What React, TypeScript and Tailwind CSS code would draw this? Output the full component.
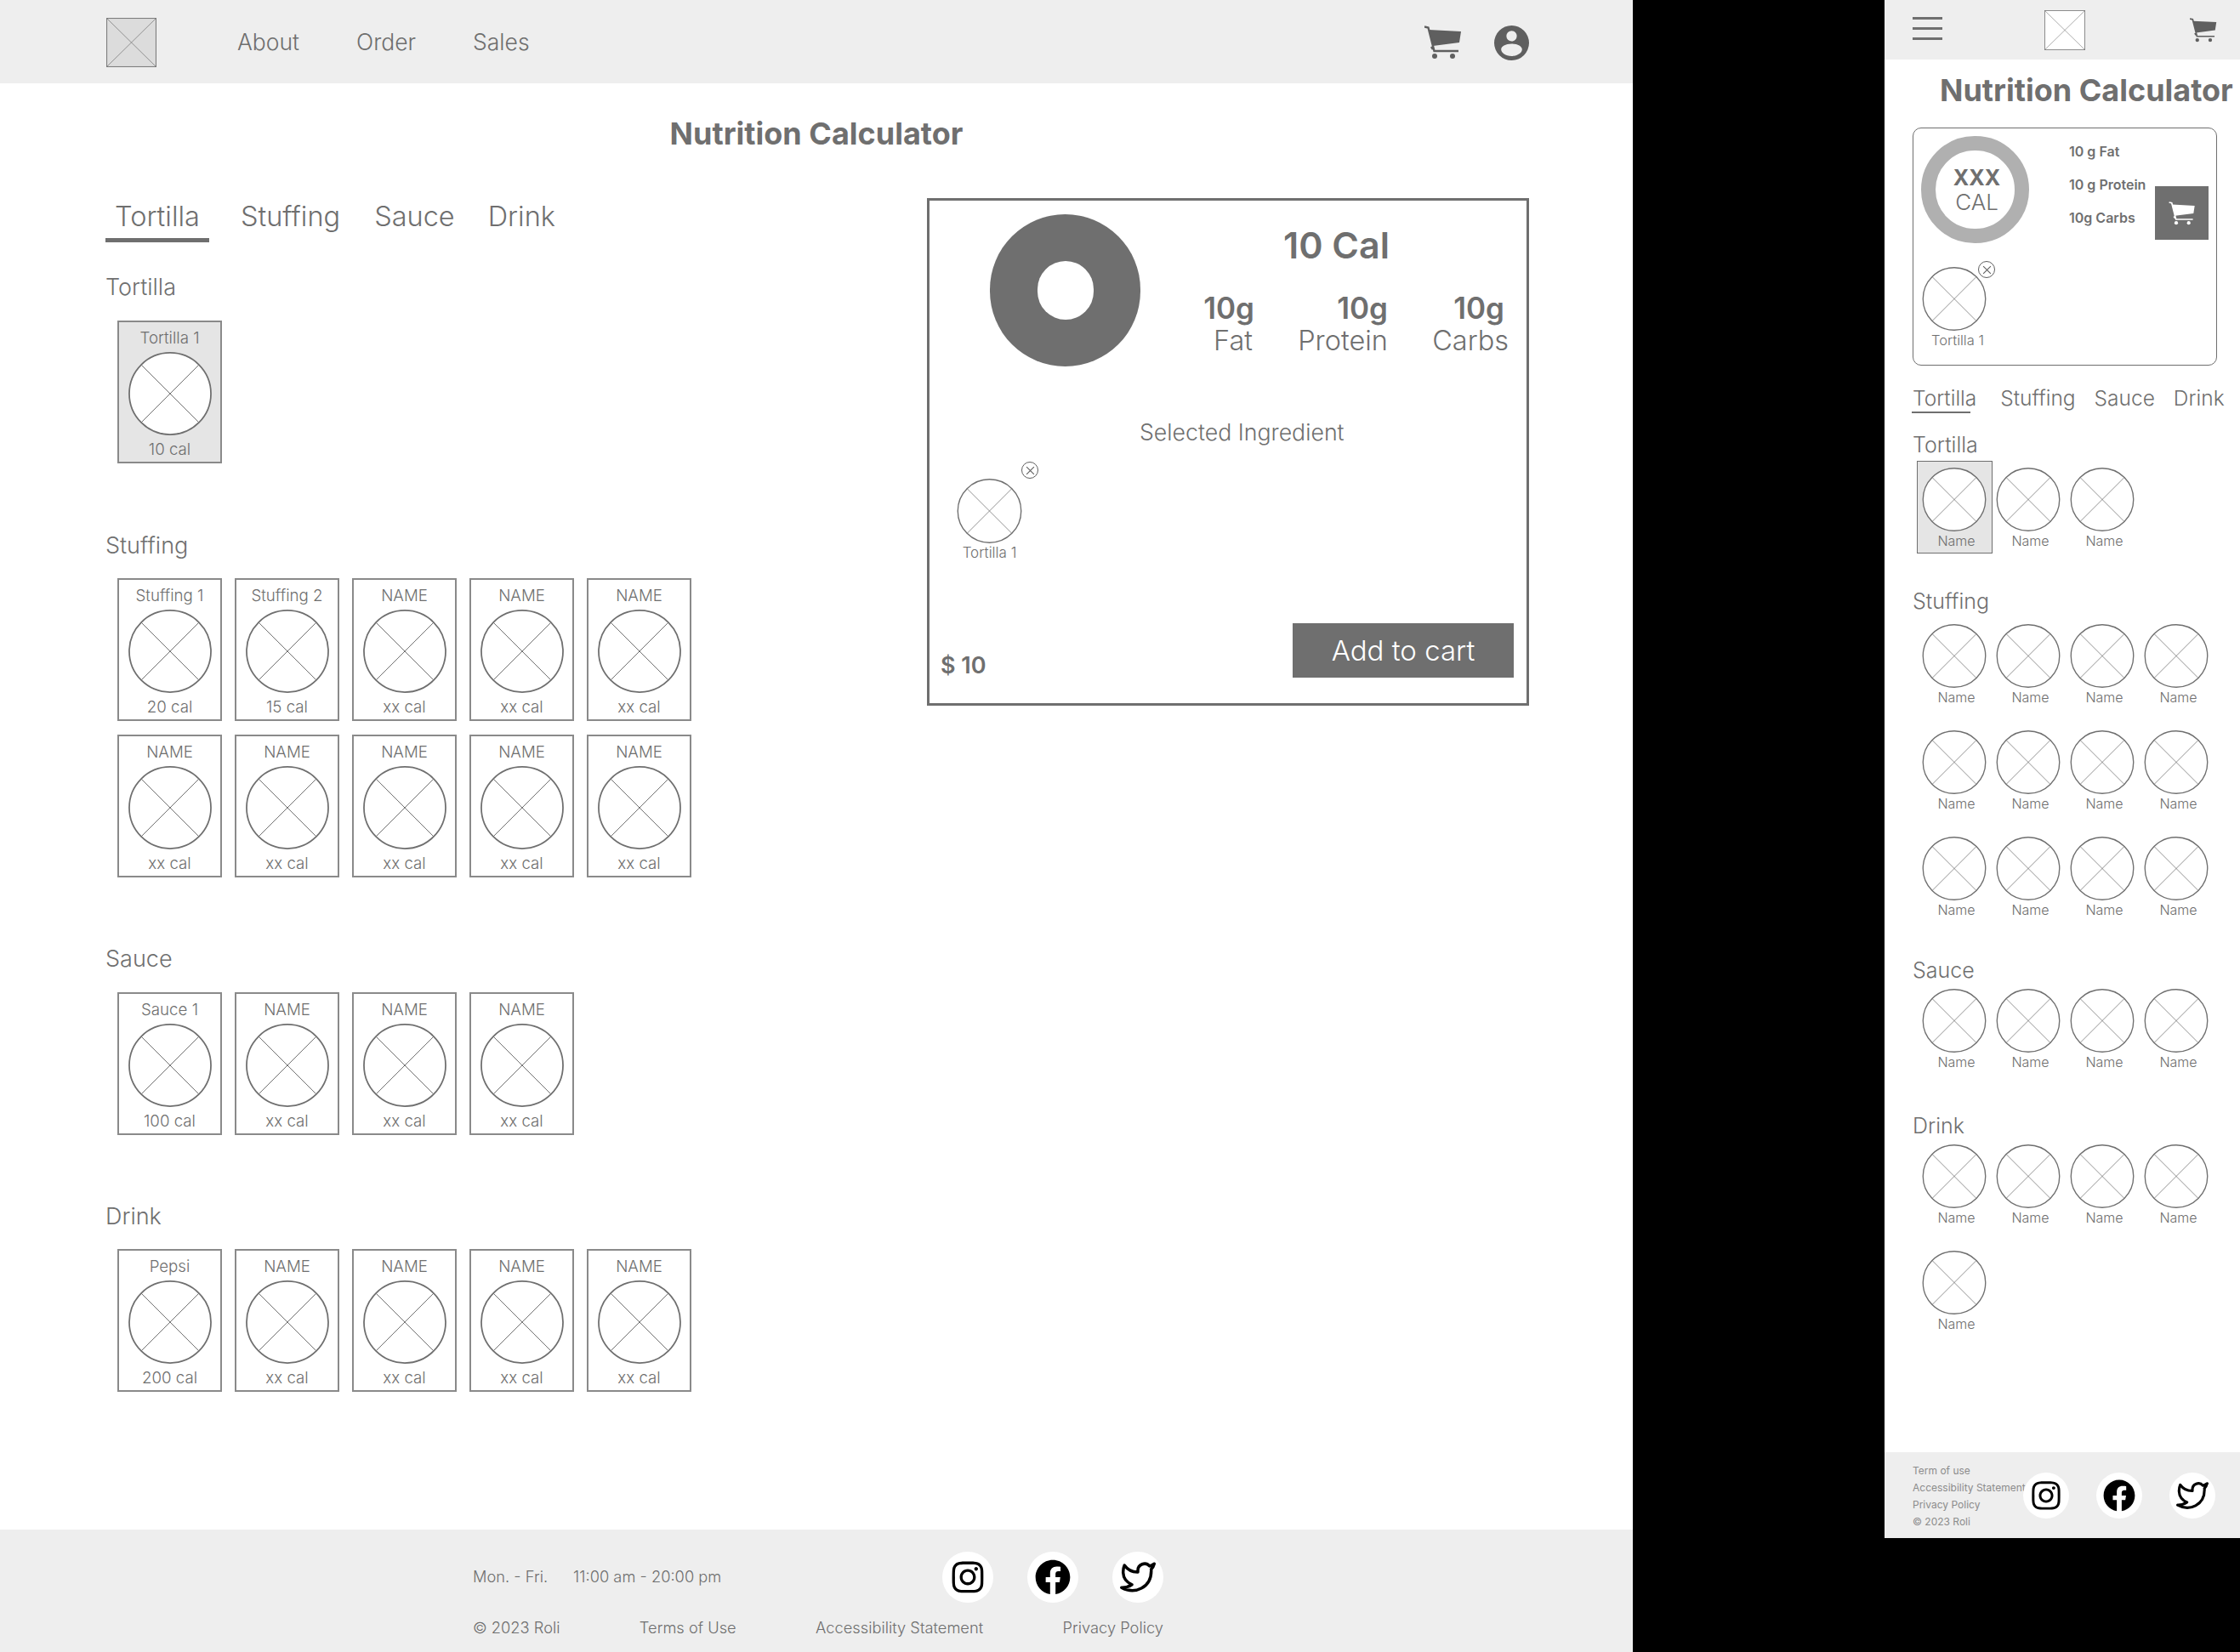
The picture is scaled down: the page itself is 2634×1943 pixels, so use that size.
import { FaFacebook, FaInstagram } from "react-icons/fa";
import { FiTwitter } from "react-icons/fi";

const stuffing = [
  { name: "Stuffing 1", cal: "20 cal" },
  { name: "Stuffing 2", cal: "15 cal" },
  ...Array.from({ length: 8 }, () => ({ name: "NAME", cal: "xx cal" })),
];
const sauces = [
  { name: "Sauce 1", cal: "100 cal" },
  ...Array.from({ length: 3 }, () => ({ name: "NAME", cal: "xx cal" })),
];
const drinks = [
  { name: "Pepsi", cal: "200 cal" },
  ...Array.from({ length: 4 }, () => ({ name: "NAME", cal: "xx cal" })),
];

const CrossCircle = ({ className }: { className: string }) => (
  <svg viewBox="0 0 100 100" className={className}>
    <circle cx="50" cy="50" r="49" fill="#fff" stroke="#6f6f6f" strokeWidth="1.8" />
    <path d="M15.500 15.500 84.500 84.500M84.500 15.500 15.500 84.500" stroke="#6f6f6f" strokeWidth="1" />
  </svg>
);

const LogoBox = ({ className, fill }: { className: string; fill: string }) => (
  <svg viewBox="0 0 60 60" preserveAspectRatio="none" className={className}>
    <rect x="0.5" y="0.5" width="59" height="59" fill={fill} stroke="#7d7d7d" strokeWidth="1.2" />
    <path d="M0 0 60 60M60 0 0 60" stroke="#7d7d7d" strokeWidth="0.8" />
  </svg>
);

const CartIcon = ({ className, color }: { className: string; color: string }) => (
  <svg viewBox="0 0 44 40" className={className}>
    <path d="M5 5 43 7 41 20 10 24Z" fill={color} />
    <path d="M0 1.500 4.500 2.500 11.500 30H40M8 25l2 3" fill="none" stroke={color} strokeWidth="2.400" />
    <circle cx="12" cy="36" r="3" fill={color} />
    <circle cx="33" cy="36" r="3" fill={color} />
  </svg>
);

const UserIcon = () => (
  <svg viewBox="0 0 40 40" className="h-[41px] w-[41px]">
    <path
      fillRule="evenodd"
      fill="#5f5f5f"
      d="M20 0a20 20 0 1 0 0 40a20 20 0 1 0 0-40ZM20 6a6 6 0 1 1 0 12a6 6 0 1 1 0-12ZM20 21c7 0 12 3 12 6.500s-5 7.500-12 7.500s-12-4-12-7.500s5-6.500 12-6.500Z"
    />
  </svg>
);

const RemoveButton = ({ className }: { className: string }) => (
  <span className={`absolute flex h-[20px] w-[20px] items-center justify-center rounded-full border border-[#5f5f5f] bg-white ${className}`}>
    <svg viewBox="0 0 10 10" className="h-[11px] w-[11px]">
      <path d="M1 1 9 9M9 1 1 9" stroke="#5f5f5f" strokeWidth="1" />
    </svg>
  </span>
);

const SocialIcons = ({ circle, icon, gap }: { circle: string; icon: string; gap: string }) => (
  <div className={`flex shrink-0 items-center ${gap}`}>
    <span className={`flex items-center justify-center rounded-full bg-white ${circle}`}>
      <FaInstagram className={`text-black ${icon}`} />
    </span>
    <span className={`flex items-center justify-center rounded-full bg-white ${circle}`}>
      <FaFacebook className={`text-black ${icon}`} />
    </span>
    <span className={`flex items-center justify-center rounded-full bg-white ${circle}`}>
      <FiTwitter className={`text-black ${icon}`} />
    </span>
  </div>
);

const IngredientCard = ({ name, cal, active }: { name: string; cal: string; active?: boolean }) => (
  <div
    className={`flex h-[168px] w-[123px] flex-col items-center border-2 border-[#8a8a8a] pt-[7px] text-[18.700px] leading-[24px] font-light ${active ? "bg-[#e5e5e5]" : "bg-white"}`}
  >
    <span>{name}</span>
    <CrossCircle className="mt-[4px] h-[98px] w-[98px]" />
    <span className="mt-[5px]">{cal}</span>
  </div>
);

const DesktopSection = ({
  title,
  items,
  className,
  gridClass,
  active,
}: {
  title: string;
  items: { name: string; cal: string }[];
  className: string;
  gridClass: string;
  active?: boolean;
}) => (
  <section className={className}>
    <h2 className="h-[36px] text-[27px] leading-[36px] font-light">{title}</h2>
    <div className={`ml-[14px] grid grid-cols-[repeat(5,123px)] gap-x-[15px] gap-y-[16px] ${gridClass}`}>
      {items.map((item, i) => (
        <IngredientCard key={i} name={item.name} cal={item.cal} active={active} />
      ))}
    </div>
  </section>
);

const Desktop = () => (
  <div className="flex h-[1943px] w-[1920px] shrink-0 flex-col bg-white">
    <header className="flex h-[98px] shrink-0 items-center justify-between bg-[#eeeeee] pt-[2px] pr-[122px] pl-[125px]">
      <div className="flex items-center">
        <LogoBox className="h-[58px] w-[59px]" fill="#dcdcdc" />
        <nav className="ml-[95px] flex gap-[67px] text-[26.500px] font-light">
          <a>About</a>
          <a>Order</a>
          <a>Sales</a>
        </nav>
      </div>
      <div className="flex items-center gap-[38px]">
        <CartIcon className="h-[40px] w-[44px]" color="#5f5f5f" />
        <UserIcon />
      </div>
    </header>

    <h1 className="mt-[37px] h-[44px] text-center text-[36px] leading-[44px] font-bold">Nutrition Calculator</h1>

    <main className="mt-[54px] flex flex-1">
      <div className="w-[1090px] shrink-0 pl-[124px]">
        <div className="flex h-[52px] items-start text-[32.500px] leading-[44px] font-light">
          <span className="flex h-[52px] w-[122px] justify-center border-b-[5px] border-[#6f6f6f]">Tortilla</span>
          <span className="ml-[37px]">Stuffing</span>
          <span className="ml-[40px]">Sauce</span>
          <span className="ml-[39px]">Drink</span>
        </div>
        <DesktopSection className="mt-[35px]" gridClass="mt-[21px]" title="Tortilla" active items={[{ name: "Tortilla 1", cal: "10 cal" }]} />
        <DesktopSection className="mt-[79px]" gridClass="mt-[20px]" title="Stuffing" items={stuffing} />
        <DesktopSection className="mt-[78px]" gridClass="mt-[21px]" title="Sauce" items={sauces} />
        <DesktopSection className="mt-[78px]" gridClass="mt-[20px]" title="Drink" items={drinks} />
      </div>

      <aside className="flex h-[597px] w-[708px] shrink-0 flex-col border-[3px] border-[#6f6f6f]">
        <div className="flex pt-[16px] pl-[71px]">
          <div className="flex h-[179px] w-[177px] shrink-0 items-center justify-center rounded-full bg-[#6f6f6f]">
            <div className="h-[69px] w-[66px] rounded-full bg-white" />
          </div>
          <div className="ml-[70px] w-[363px]">
            <div className="mt-[9px] pr-[42px] text-center text-[43px] leading-[54px] font-semibold">10 Cal</div>
            <div className="mt-[27px] grid grid-cols-[62px_159px_142px] text-right">
              <span className="-mr-[2px] text-[35px] leading-[40px] font-semibold">10g</span>
              <span className="text-[35px] leading-[40px] font-semibold">10g</span>
              <span className="pr-[5px] text-[35px] leading-[40px] font-semibold">10g</span>
              <span className="text-[32.500px] leading-[38px] font-light">Fat</span>
              <span className="text-[32.500px] leading-[38px] font-light">Protein</span>
              <span className="text-[32.500px] leading-[38px] font-light">Carbs</span>
            </div>
          </div>
        </div>
        <div className="mt-[61px] pl-[247px] text-[26.700px] leading-[32px] font-light">Selected Ingredient</div>
        <div className="mt-[39px] ml-[32px] flex w-[77px] flex-col items-center">
          <div className="relative h-[76px] w-[77px]">
            <CrossCircle className="h-[76px] w-[77px]" />
            <RemoveButton className="-top-[20px] -right-[19px]" />
          </div>
          <span className="mt-[1px] text-[17px] leading-[20px] font-light whitespace-nowrap">Tortilla 1</span>
        </div>
        <div className="mt-auto flex items-end justify-between pr-[15px] pb-[30px] pl-[13px]">
          <span className="-mb-[4px] text-[27px] leading-[36px] font-semibold">$ 10</span>
          <button className="h-[64px] w-[260px] bg-[#6f6f6f] pt-[2px] text-[33px] font-light text-white">Add to cart</button>
        </div>
      </aside>
    </main>

    <footer className="flex h-[144px] shrink-0 flex-col bg-[#eeeeee] pt-[26px] pl-[556px] text-[18.300px] font-light">
      <div className="flex h-[60px] w-[812px] items-center justify-between">
        <div className="flex gap-[30px]">
          <span>Mon. - Fri.</span>
          <span>11:00 am - 20:00 pm</span>
        </div>
        <SocialIcons circle="h-[60px] w-[60px]" icon="h-[42px] w-[42px]" gap="gap-[40px]" />
      </div>
      <div className="mt-[17px] flex w-[812px] justify-between leading-[24px]">
        <span>© 2023 Roli</span>
        <span>Terms of Use</span>
        <span>Accessibility Statement</span>
        <span>Privacy Policy</span>
      </div>
    </footer>
  </div>
);

const MobileItem = ({ name, active }: { name: string; active?: boolean }) => (
  <div className={`flex h-[109px] w-[89px] flex-col items-center border pt-[7px] ${active ? "border-[#6f6f6f] bg-[#e5e5e5]" : "border-transparent"}`}>
    <CrossCircle className="-ml-[1px] h-[75px] w-[76px]" />
    <span className="mt-[1px] pl-[4px] text-[16px] leading-[20px] font-light">{name}</span>
  </div>
);

const MobileSection = ({
  title,
  count,
  className,
  gridClass,
  active,
}: {
  title: string;
  count: number;
  className: string;
  gridClass: string;
  active?: boolean;
}) => (
  <section className={className}>
    <h2 className="ml-[33px] h-[30px] text-[25px] leading-[30px] font-light">{title}</h2>
    <div className={`ml-[38px] grid grid-cols-[repeat(4,87px)] gap-y-[16px] ${gridClass}`}>
      {Array.from({ length: count }, (_, i) => (
        <MobileItem key={i} name="Name" active={active && i === 0} />
      ))}
    </div>
  </section>
);

const Mobile = () => (
  <div className="ml-[296px] flex h-[1809px] w-[418px] shrink-0 flex-col bg-white">
    <header className="flex h-[70px] shrink-0 items-center justify-between bg-[#eeeeee] pr-[27px] pl-[33px]">
      <div className="mb-[4px] flex w-[35px] flex-col gap-[9px]">
        <span className="h-[3px] bg-[#6f6f6f]" />
        <span className="h-[3px] bg-[#6f6f6f]" />
        <span className="h-[3px] bg-[#6f6f6f]" />
      </div>
      <LogoBox className="mr-[3px] h-[47px] w-[48px]" fill="#ffffff" />
      <CartIcon className="h-[29px] w-[32px]" color="#5f5f5f" />
    </header>

    <h1 className="mt-[14px] h-[44px] pl-[65px] text-[36px] leading-[44px] font-bold whitespace-nowrap">Nutrition Calculator</h1>

    <div className="mt-[22px] ml-[33px] flex h-[280px] w-[358px] flex-col rounded-[10px] border border-[#6f6f6f] pt-[9px] pl-[9px]">
      <div className="flex items-start">
        <div className="flex h-[126px] w-[127px] shrink-0 flex-col items-center justify-center rounded-full border-[17px] border-[#b0b0b0] pl-[4px]">
          <span className="mt-[1px] text-[25px] leading-[28px] font-bold">XXX</span>
          <span className="text-[26px] leading-[30px] font-light">CAL</span>
        </div>
        <div className="mt-[8px] ml-[47px] flex w-[101px] shrink-0 flex-col gap-[19px] text-[16px] leading-[20px] font-semibold whitespace-nowrap">
          <span>10 g Fat</span>
          <span>10 g Protein</span>
          <span>10g Carbs</span>
        </div>
        <div className="mt-[59px] flex h-[63px] w-[63px] shrink-0 items-center justify-center bg-[#6f6f6f]">
          <CartIcon className="h-[28px] w-[32px]" color="#ffffff" />
        </div>
      </div>
      <div className="mt-[28px] ml-[1px] flex w-[76px] flex-col items-center">
        <div className="relative h-[75px] w-[76px]">
          <CrossCircle className="h-[75px] w-[76px]" />
          <RemoveButton className="-top-[7px] -right-[10px]" />
        </div>
        <span className="mt-[1px] pl-[8px] text-[16.500px] leading-[20px] font-light whitespace-nowrap">Tortilla 1</span>
      </div>
    </div>

    <div className="mt-[23px] ml-[33px] flex h-[30px] text-[24.500px] leading-[30px] font-light">
      <span>Tortilla</span>
      <span className="ml-[28px]">Stuffing</span>
      <span className="ml-[22px]">Sauce</span>
      <span className="ml-[22px]">Drink</span>
    </div>
    <div className="mt-[1px] ml-[32px] h-[2px] w-[69px] bg-[#6f6f6f]" />

    <MobileSection className="mt-[22px]" gridClass="mt-[4px]" title="Tortilla" count={3} active />
    <MobileSection className="mt-[41px]" gridClass="mt-[4px]" title="Stuffing" count={12} />
    <MobileSection className="mt-[41px]" gridClass="-mt-[1px]" title="Sauce" count={4} />
    <MobileSection className="mt-[45px]" gridClass="-mt-[1px]" title="Drink" count={5} />

    <footer className="mt-auto flex h-[101px] shrink-0 items-center bg-[#eeeeee] pl-[33px]">
      <div className="w-[130px] shrink-0 self-start pt-[12px] text-[12px] leading-[20px] whitespace-nowrap text-[#8c8c8c]">
        <div>Term of use</div>
        <div>Accessibility Statement</div>
        <div>Privacy Policy</div>
        <div>© 2023 Roli</div>
      </div>
      <SocialIcons circle="h-[54px] w-[54px]" icon="h-[38px] w-[38px]" gap="gap-[32px]" />
    </footer>
  </div>
);

export default function App() {
  return (
    <div className="flex h-[1943px] w-[2634px] items-start overflow-hidden bg-black font-[Inter,sans-serif] text-[#6f6f6f]">
      <Desktop />
      <Mobile />
    </div>
  );
}
